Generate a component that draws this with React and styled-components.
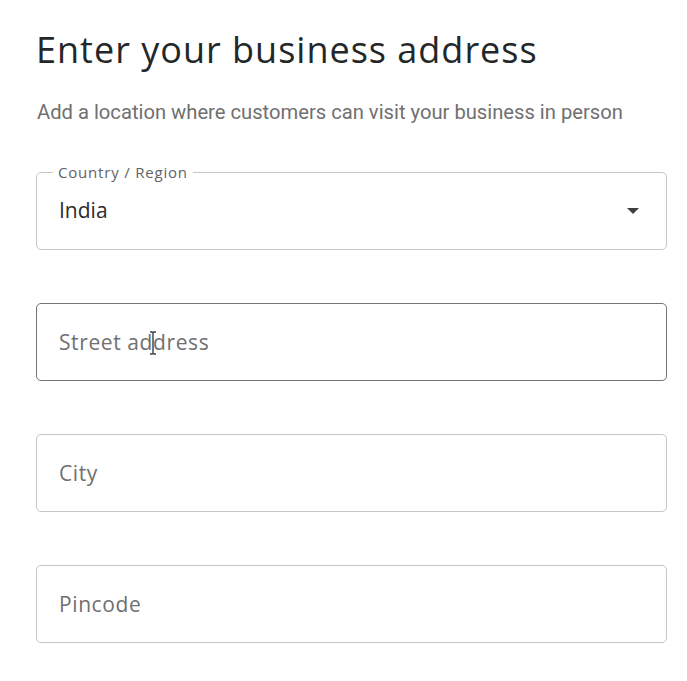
import React from "react";
import styled, { createGlobalStyle } from "styled-components";

const GlobalStyle = createGlobalStyle`
  html, body {
    margin: 0;
    padding: 0;
    background: #ffffff;
  }
  body {
    font-family: "Open Sans", Roboto, Arial, sans-serif;
  }
`;

const Page = styled.main`
  width: 631px;
  padding: 26px 0 0 36px;
  display: flex;
  flex-direction: column;
`;

const Title = styled.h1`
  margin: 0;
  font-size: 36px;
  font-weight: 400;
  line-height: 48px;
  letter-spacing: 1px;
  color: #24272a;
`;

const Subtitle = styled.p`
  margin: 26px 0 0 1px;
  font-family: Roboto, Arial, sans-serif;
  font-size: 20.2px;
  line-height: 24px;
  color: #707070;
`;

const Fields = styled.div`
  margin-top: 48px;
  display: flex;
  flex-direction: column;
  gap: 53px;
`;

const FieldBox = styled.div`
  position: relative;
  height: 78px;
  box-sizing: border-box;
  border: 1.5px solid ${({ $active }) => ($active ? "#747474" : "#c6c6c6")};
  border-radius: 5px;
  display: flex;
  align-items: center;
  padding: 0 22px;
`;

const Legend = styled.span`
  position: absolute;
  top: -11px;
  left: 16px;
  padding: 0 5px;
  background: #fff;
  font-size: 15px;
  line-height: 20px;
  letter-spacing: 0.8px;
  color: #5f6368;
`;

const Value = styled.span`
  flex: 1;
  font-size: 21px;
  color: #2b2b2b;
  padding-bottom: 2px;
`;

const Placeholder = styled.span`
  flex: 1;
  font-size: 21px;
  letter-spacing: 0.6px;
  color: #707070;
  position: relative;
`;

const Caret = styled.svg`
  width: 14px;
  height: 8px;
  margin-right: 4px;
  fill: #3c4043;
`;

const Cursor = styled.svg`
  position: absolute;
  left: 89px;
  top: 2px;
  width: 10px;
  height: 26px;
`;

export default function App() {
  return (
    <>
      <GlobalStyle />
      <Page>
        <Title>Enter your business address</Title>
        <Subtitle>
          Add a location where customers can visit your business in person
        </Subtitle>
        <Fields>
          <FieldBox>
            <Legend>Country / Region</Legend>
            <Value>India</Value>
            <Caret viewBox="0 0 14 8">
              <path d="M1 1 L13 1 L7 7 Z" />
            </Caret>
          </FieldBox>
          <FieldBox $active>
            <Placeholder>
              Street address
              <Cursor viewBox="0 0 10 26">
                <path
                  d="M2 2 H4 Q5 2 5 3 V23 Q5 24 4 24 H2 M8 2 H6 Q5 2 5 3 M5 23 Q5 24 6 24 H8"
                  stroke="#3a3f44"
                  strokeWidth="1.4"
                  fill="none"
                />
              </Cursor>
            </Placeholder>
          </FieldBox>
          <FieldBox>
            <Placeholder>City</Placeholder>
          </FieldBox>
          <FieldBox>
            <Placeholder>Pincode</Placeholder>
          </FieldBox>
        </Fields>
      </Page>
    </>
  );
}
